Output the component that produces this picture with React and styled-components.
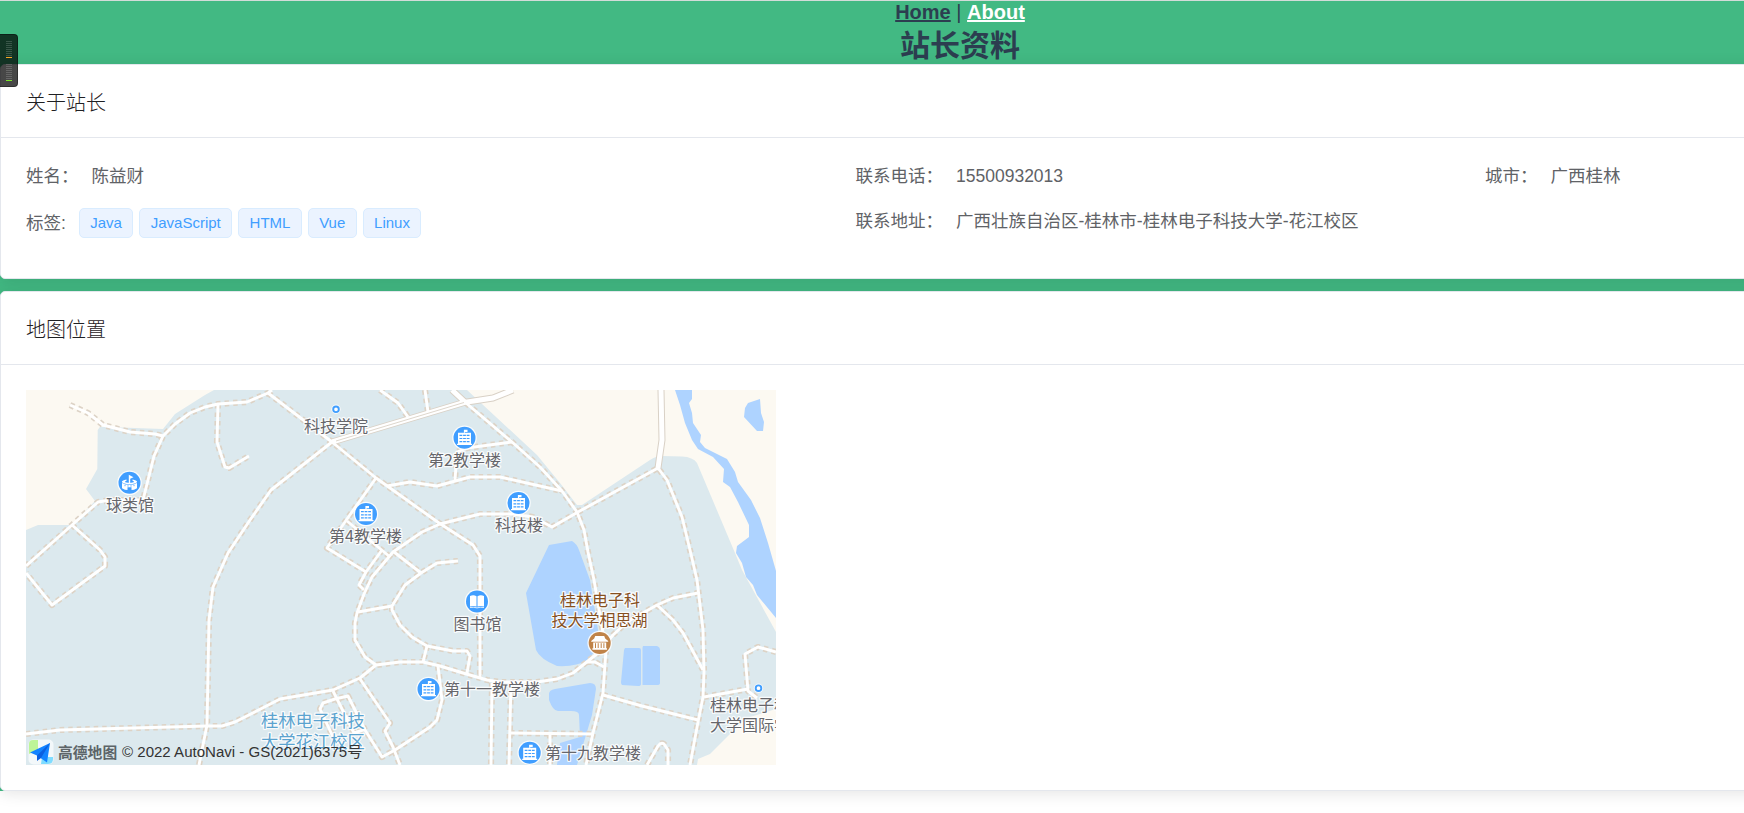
import React from "react";
import styled, { createGlobalStyle, css } from "styled-components";

const GlobalStyle = createGlobalStyle`
  *, *::before, *::after { box-sizing: border-box; }
  html, body { margin: 0; padding: 0; background: #fff; }
  body { font-family: "Liberation Sans", "Noto Sans CJK SC", sans-serif; }
`;

const Viewport = styled.div`
  width: 100%;
  height: 100vh;
  overflow: hidden;
`;

const Page = styled.div`
  position: relative;
  width: 1920px;
  background: #42b983;
  border-top: 1px solid #d3dcd9;
  color: #2c3e50;
`;

const Nav = styled.nav`
  height: 23px;
  font-size: 20px;
  line-height: 23px;
  text-align: center;
`;

const NavLink = styled.a`
  font-weight: bold;
  text-decoration: underline;
  color: ${(p) => (p.$active ? "#fff" : "#2c3e50")};
`;

const PageTitle = styled.h1`
  margin: 0;
  height: 40px;
  font-size: 30px;
  line-height: 44px;
  font-weight: bold;
  text-align: center;
`;

const Cards = styled.main`
  display: flex;
  flex-direction: column;
  gap: 12px;
`;

const Card = styled.section`
  height: ${(p) => p.$height}px;
  background: #fff;
  border: 1px solid #e4e7ed;
  border-radius: 5px;
  box-shadow: 0 2.5px 15px rgba(0, 0, 0, 0.1);
`;

const CardHeader = styled.header`
  height: 73px;
  padding: 0 25px;
  border-bottom: 1px solid #e4e7ed;
  font-size: 20px;
  font-weight: 300;
  line-height: 76px;
  color: #1f2023;
`;

const CardBody = styled.div`
  padding: 25px;
`;

const InfoGrid = styled.div`
  display: grid;
  grid-template-columns: 829.5px 629.5px 1fr;
  grid-template-rows: 25px 30px;
  row-gap: 20px;
  font-size: 17.5px;
  line-height: 27px;
  color: #606266;
`;

const Field = styled.div`
  display: flex;
  gap: 13px;
  white-space: nowrap;
`;

const TagField = styled(Field)`
  align-items: center;
  line-height: 27px;
`;

const TagList = styled.div`
  display: flex;
  gap: 6px;
`;

const Tag = styled.span`
  height: 30px;
  padding: 0 10.4px;
  border: 1px solid #d9ecff;
  border-radius: 5px;
  background: #ebf3ff;
  color: #409eff;
  font-size: 15px;
  line-height: 27px;
`;

const MapFrame = styled.div`
  position: relative;
  width: 750px;
  height: 375px;
  overflow: hidden;
`;

const MapCanvas = styled.svg`
  display: block;
  width: 750px;
  height: 375px;
`;

const label = css`
  font-family: "Noto Sans CJK SC", sans-serif;
  paint-order: stroke;
  stroke: rgba(255, 255, 255, 0.85);
  stroke-width: 2.5px;
  stroke-linejoin: round;
`;

const MapLabel = styled.text`
  ${label}
  font-size: ${(p) => p.$size || 16}px;
  fill: ${(p) => p.$color || "#66666b"};
  text-anchor: ${(p) => (p.$start ? "start" : "middle")};
`;

const Attribution = styled.div`
  position: absolute;
  left: 2px;
  bottom: 0;
  display: flex;
  align-items: center;
  height: 26px;
  color: #333;
  font-size: 15.05px;
  line-height: 22px;
  white-space: nowrap;
  span {
    margin-bottom: 1px;
  }
`;

const LogoMark = styled.svg`
  width: 26px;
  height: 26px;
  margin-right: 4px;
`;

const LogoText = styled.span`
  width: 64px;
  font-family: "Noto Sans CJK SC", sans-serif;
  font-size: 14.8px;
  font-weight: bold;
  color: #5c6468;
`;

const Meter = styled.aside`
  position: absolute;
  left: 0;
  top: 33px;
  width: 18px;
  height: 53px;
  padding: 6px 5px 0 6px;
  display: flex;
  flex-direction: column;
  gap: 6px;
  background: rgba(0, 0, 0, 0.72);
  border: 1px solid rgba(0, 0, 0, 0.35);
  border-left: 0;
  border-radius: 0 4px 4px 0;
`;

const MeterBars = styled.div`
  display: flex;
  flex-direction: column;
  gap: 1px;
`;

const Bar = styled.span`
  height: 1px;
  background: ${(p) => p.$color || "rgba(255, 255, 255, 0.17)"};
`;

const paths = [
  "M70 405L88 413L103 425L130 432L155 434L163 436",
  "M26 566L72 525L98 502L110 500L143 500L148 480L154 456L163 436L175 424L190 413L205 407L218 404L247 402L268 393L272 390",
  "M218 404L217 442L225 467L229 468L249 456",
  "M72 525L100 550L105 557L105 566L52 605L26 573",
  "M268 393L332 442L376 478L439 523L473 545L480 556L480 678",
  "M332 442L271 490L250 520L228 553L213 587L209 620L207 725L199 765",
  "M26 734L60 730L207 726L222 726L235 722L280 699L333 690L360 678L376 665L400 662L423 662L440 666L463 673L487 680L500 682L537 682L557 679L573 673L598 653L613 635L627 622L657 605L673 598L698 593",
  "M466 403L512 442L540 467L562 491L577 512L584 530L588 552L594 580L602 627L606 650L603 693L593 733L586 765",
  "M512 442L467 448L457 452L455 480",
  "M387 486L410 482L437 486L470 477L500 477L562 491",
  "M578 512L552 527L533 517L512 514L480 514L440 524L422 532L393 552L372 577L364 594L357 613L355 623L355 640L365 657L376 665",
  "M578 512L658 468L667 480L682 517L690 550L697 580L703 630L704 672L703 697L698 722L690 765",
  "M376 478L347 519L327 548L366 572",
  "M347 521L390 557",
  "M382 550L366 572L359 585L364 590",
  "M394 552L421 573",
  "M458 561L437 563L421 573L405 585L392 606L392 610L400 625L412 637L427 646L453 651L467 651L470 656L467 673",
  "M358 612L392 606",
  "M427 646L423 662",
  "M438 666L442 700L437 720L430 727L395 750L382 757L365 730L348 696L335 699L323 703L320 709L333 737",
  "M333 691L354 733L366 729",
  "M360 679L390 723L385 731L393 747L400 765",
  "M492 683L491 765",
  "M511 683L509 765",
  "M510 733L593 734",
  "M550 734L550 765",
  "M603 695L642 706L698 720",
  "M657 605L673 620L683 633L703 670",
  "M704 697L748 689",
  "M776 652L758 647L745 654L748 691L757 698",
  "M647 765L658 746Q661 742 664 744L668 750L668 765",
  "M587 662L595 662L604 667",
  "M380 390L398 403L408 417",
  "M425 390L428 412",
];

const water = [
  "M675 390L680 405L685 423L692 440L698 449L713 457L724 469L723 482L730 487L738 502L749 525L749 537L737 546L736 553L742 563L746 577L753 585L757 595L776 618V571L768 543L760 518L751 500L738 482L735 472L727 459L705 448L700 442L701 435L693 423L692 413L689 403L692 399V390Z",
  "M748 403L760 399L761 413L764 422L763 431H757L744 417L745 408Z",
  "M549 545L572 541Q577 544 579 550L590 580L598 630V648L587 660Q577 667 557 666Q540 659 536 650L526 593L537 570Z",
  "M625 648H639Q641 648 641 650V684Q641 686 638 686L622 685Q621 684 621 682L624 650Z",
  "M643 646H657Q660 647 660 650V683Q660 685 657 685H642.500V648Z",
  "M555 689L590 683Q596 683 596 689L592 715L577 765H557L560 743L580 737L579 715Q579 711 571 711H558Q553 711 549 700V694Q549 690 555 689Z",
];

const Building = () => (
  <g fill="#fff">
    <path d="M-.6-5V-8H3v2.200H.6V-5z" />
    <path d="M-6.500-5h13V6h1v1.200h-15V6h1z" />
    <path
      d="M-5-2.300h2.800M-1.400-2.300h2.800M2.200-2.300H5M-5 .8h2.800M-1.400.8h2.800M2.200.8H5M-5 3.900h2.800M-1.400 3.900h2.800M2.200 3.900H5"
      stroke="#409eff"
      strokeWidth="1.200"
    />
  </g>
);

const Stadium = () => (
  <g fill="#fff">
    <path d="M-.7-8L4-5.500.7-4V1H-.7z" />
    <path d="M-3-3.200C-9-2-8-.5-6 .6Q0 2.500 6 .6C8-.5 9-2 3-3.200V-2Q6-1 3-.2 0 .4-3-.2-6-1-3-2z" />
    <path d="M-7.500 .2Q0 4 7.500 .2V5.500L4.500 7 2 7.200V4.500H-2V7.200L-4.500 7-7.500 5.500z" />
    <path d="M-4.500 2v1.500M-1.500 2.500v1.500M1.500 2.500v1.500M4.500 2v1.500" stroke="#409eff" strokeWidth=".8" />
  </g>
);

const Book = () => (
  <g fill="#fff">
    <path d="M-7-5.500Q-3.500-7-.5-5.300V5Q-3.500 4-7 5z" />
    <path d="M7-5.500Q3.500-7 .5-5.300V5Q3.500 4 7 5z" />
    <path d="M-7 6Q-3 5.300 0 6.400 3 5.300 7 6" fill="none" stroke="#fff" strokeWidth=".8" />
  </g>
);

const Pavilion = () => (
  <g fill="#fff">
    <path d="M-4.500-7h9L5.500-4.500 8.500-2v.8h-17V-2l3-2.500z" />
    <path d="M-6.500 -.4h13V5.200h.8v1.600h-14.600V5.200h.8z" />
    <path d="M-4.200 .2v4.800M-1.500 .2v4.800M1.500 .2v4.800M4.200 .2v4.800" stroke="#c08348" strokeWidth="1" />
  </g>
);

const Pin = ({ x, y, color = "#409eff", children }) => (
  <g transform={`translate(${x} ${y})`}>
    <circle r="12.300" fill="#fff" fillOpacity=".85" />
    <circle r="11" fill={color} />
    {children}
  </g>
);

const Dot = ({ x, y }) => (
  <g>
    <circle cx={x} cy={y} r="4.700" fill="#fff" fillOpacity=".8" />
    <circle cx={x} cy={y} r="2.800" fill="#fff" stroke="#409eff" strokeWidth="1.900" />
  </g>
);

const buildings = [
  [366, 514],
  [464.5, 437.7],
  [518.5, 503],
  [428.5, 689],
  [529.7, 752.7],
];

const labels = [
  { x: 336, y: 432, text: "科技学院" },
  { x: 464.5, y: 466, text: "第2教学楼" },
  { x: 519, y: 531, text: "科技楼" },
  { x: 130, y: 511, text: "球类馆" },
  { x: 365.5, y: 542, text: "第4教学楼" },
  { x: 477.5, y: 629.5, text: "图书馆" },
  { x: 444, y: 695, text: "第十一教学楼", start: true },
  { x: 545, y: 758.5, text: "第十九教学楼", start: true },
  { x: 710, y: 711, text: "桂林电子科", start: true },
  { x: 710, y: 731, text: "大学国际学", start: true },
  { x: 600, y: 606, text: "桂林电子科", color: "#86501f" },
  { x: 599.5, y: 626, text: "技大学相思湖", color: "#86501f" },
  { x: 261, y: 727, text: "桂林电子科技", start: true, color: "#5ba3cf", size: 17.3 },
  { x: 261, y: 747.5, text: "大学花江校区", start: true, color: "#5ba3cf", size: 17.3 },
];

function CampusMap() {
  return (
    <MapFrame>
      <MapCanvas viewBox="26 390 750 375">
        <rect x="26" y="390" width="750" height="375" fill="#fcf9f2" />
        <path
          fill="#dce9ee"
          d="M214 390L205 395L175 414L163 429L100 426.700L97.700 430L97.300 469L86 489L95 501L72 525H38L26 530V765H697L698 759L710 754L730 734L747 718L776 709V632L742 570L735 553L697 463Q693 457 682 456.500L662 456Q656 456 650 460L582 505H577L560 483L537 455L467 390Z"
        />
        {water.map((d) => (
          <path key={d} d={d} fill="#aed3ff" />
        ))}
        <g fill="none" strokeLinejoin="round">
          {paths.map((d) => (
            <path key={d} d={d} stroke="#ddd3c6" strokeWidth="6.200" strokeDasharray="4.500 4" />
          ))}
          <path d="M332 442L464 402.500L493 398L513 390M452 390L466 403M661 390L662 440L658 468" stroke="#d9d1c6" strokeWidth="7" />
          <path d="M332 442L464 402.500L493 398L513 390M452 390L466 403M661 390L662 440L658 468" stroke="#fff" strokeWidth="5" />
          <path d="M336 441L464 402.500" stroke="#d9d1c6" strokeWidth=".9" />
          {paths.map((d) => (
            <path key={d} d={d} stroke="#fff" strokeWidth="2.900" />
          ))}
        </g>
        <Pin x={129.5} y={482.7}><Stadium /></Pin>
        {buildings.map(([x, y]) => (
          <Pin key={x} x={x} y={y}><Building /></Pin>
        ))}
        <Pin x={477} y={601.5}><Book /></Pin>
        <Pin x={599.7} y={643} color="#c08348"><Pavilion /></Pin>
        <Dot x={336} y={409.3} />
        <Dot x={758.5} y={688.2} />
        {labels.map((l) => (
          <MapLabel key={`${l.x}-${l.y}`} x={l.x} y={l.y} $start={l.start} $color={l.color} $size={l.size}>
            {l.text}
          </MapLabel>
        ))}
      </MapCanvas>
      <Attribution>
        <LogoMark viewBox="0 0 26 26">
          <rect x=".5" y=".5" width="25" height="25" rx="5" fill="#f3f8fa" />
          <path d="M1 5Q1 1 5 1H10V11L1 15z" fill="#bdf598" />
          <path d="M14 18H25V20Q25 25 20 25H13z" fill="#7fdcff" />
          <path d="M22 4L2 13.500L9 16.500L19 23.500z" fill="#1283ff" />
          <path d="M22 4L9 16.500V22L13 19z" fill="#0a5fe0" />
        </LogoMark>
        <LogoText>高德地图</LogoText>
        <span>© 2022 AutoNavi - GS(2021)6375号</span>
      </Attribution>
    </MapFrame>
  );
}

const InfoField = ({ name, value }) => (
  <Field>
    <span>{name}：</span>
    <span>{value}</span>
  </Field>
);

const MeterGroup = ({ color }) => (
  <MeterBars>
    {Array.from({ length: 8 }, (_, i) => (
      <Bar key={i} />
    ))}
    <Bar $color={color} />
  </MeterBars>
);

export default function App() {
  return (
    <Viewport>
      <GlobalStyle />
      <Page>
        <Nav>
          <NavLink>Home</NavLink> | <NavLink $active>About</NavLink>
        </Nav>
        <PageTitle>站长资料</PageTitle>
        <Cards>
          <Card $height={215}>
            <CardHeader>关于站长</CardHeader>
            <CardBody>
              <InfoGrid>
                <InfoField name="姓名" value="陈益财" />
                <InfoField name="联系电话" value="15500932013" />
                <InfoField name="城市" value="广西桂林" />
                <TagField>
                  <span>标签:</span>
                  <TagList>
                    {["Java", "JavaScript", "HTML", "Vue", "Linux"].map((t) => (
                      <Tag key={t}>{t}</Tag>
                    ))}
                  </TagList>
                </TagField>
                <InfoField name="联系地址" value="广西壮族自治区-桂林市-桂林电子科技大学-花江校区" />
              </InfoGrid>
            </CardBody>
          </Card>
          <Card $height={500}>
            <CardHeader>地图位置</CardHeader>
            <CardBody>
              <CampusMap />
            </CardBody>
          </Card>
        </Cards>
        <Meter>
          <MeterGroup color="#f5a623" />
          <MeterGroup color="#7ee62a" />
        </Meter>
      </Page>
    </Viewport>
  );
}
